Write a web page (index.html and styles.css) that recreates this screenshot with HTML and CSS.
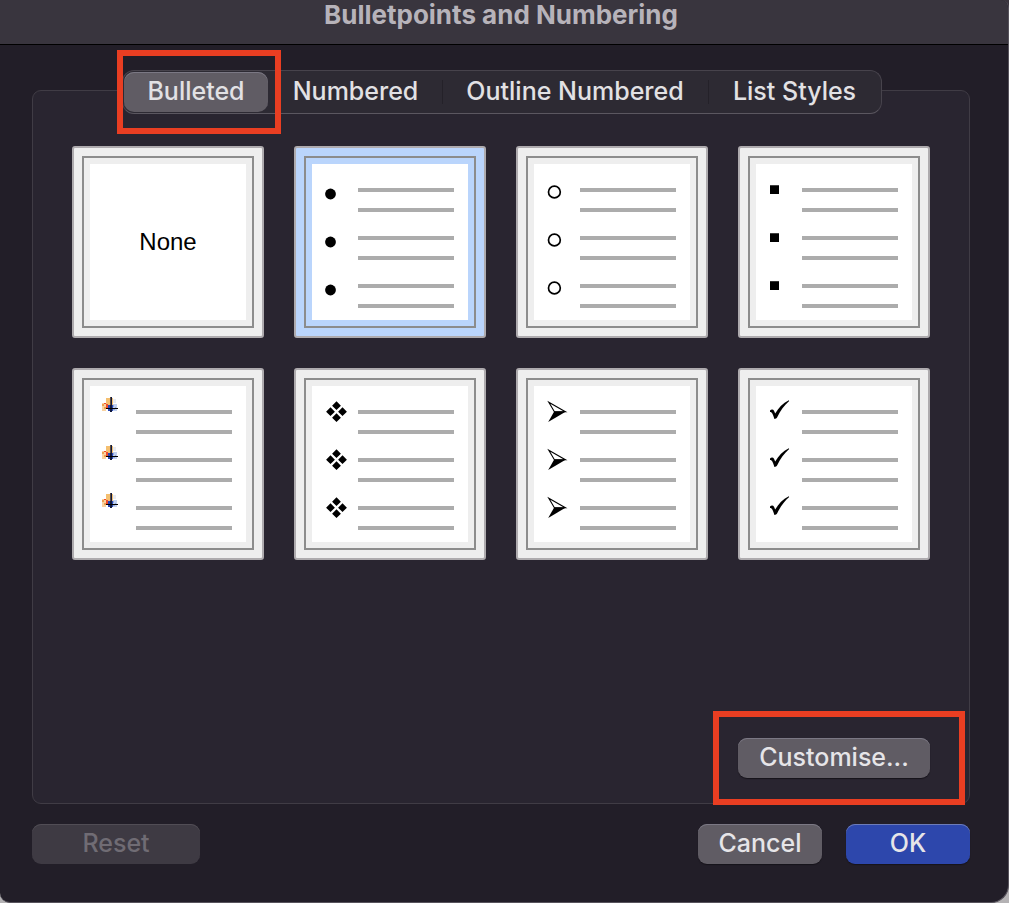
FILE: index.html
```html
<!DOCTYPE html>
<html lang="en-GB">
<head>
<meta charset="utf-8">
<meta name="viewport" content="width=device-width, initial-scale=1">
<title>Bulletpoints and Numbering</title>
<link rel="stylesheet" href="styles.css">
</head>
<body>
<svg class="defs" aria-hidden="true">
  <symbol id="lines" viewBox="0 0 156 156">
    <path fill="#acacac" d="M46 24h96v4h-96zM46 44h96v4h-96zM46 72h96v4h-96zM46 92h96v4h-96zM46 120h96v4h-96zM46 140h96v4h-96z"/>
  </symbol>
  <g id="disc"><circle cx="18.5" cy="30" r="5.4"/></g>
  <g id="ring"><circle cx="20.4" cy="28" r="5.9" fill="none" stroke="#000" stroke-width="1.7"/></g>
  <g id="square"><path d="M14 21.2h9v8.8h-9z"/></g>
  <g id="picture" shape-rendering="crispEdges">
    <path fill="#f9d3a0" d="M12 17h4v8h-4z"/>
    <path fill="#f4bf70" d="M16 12h7v7h-7z"/>
    <path fill="#f0a050" d="M12 18h2v2h-2zM14 21h2v2h-2z"/>
    <path fill="#f04a2a" d="M14 17h2v1h-2zM16 18h2v4h-2z"/>
    <path fill="#e8ebf2" d="M23 13h3v4h-3z"/>
    <path fill="#c3d2f0" d="M23 18h4v7h-4z"/>
    <path fill="#91a8dc" d="M23 19h1v2h-1zM25 21h1v1h-1zM23 23h2v1h-2z"/>
    <path fill="#2848b4" d="M18 19h5v6h-5z"/>
    <path fill="#5a4c40" d="M20 11h2v8h-2z"/>
    <path fill="#10183c" d="M21 11h1v15h-1zM20 19h1v7h-1z"/>
    <path fill="#000" d="M16 22h12v1h-12z"/>
  </g>
  <g id="diamonds"><path d="M24.5 15.3l4.4 4.4-4.4 4.4-4.4-4.4zM24.5 27.3l4.4 4.4-4.4 4.4-4.4-4.4zM18.5 21.3l4.4 4.4-4.4 4.4-4.4-4.4zM30.5 21.3l4.4 4.4-4.4 4.4-4.4-4.4z"/></g>
  <g id="arrow">
    <path d="M14.8 16.2L31.4 25.7H20.4z" fill="#fff" stroke="#000" stroke-width="1.1"/>
    <path d="M32 25.4L14.2 36l6-10.6z"/>
  </g>
  <g id="check"><path d="M14 24.6c1.2-1.4 3.200-1.400 4 .2l1.200 2.800c3.400-6 7.600-10.600 13.600-13.400l.4.8c-5 4.400-8.800 9.800-12 16.200-.6 1-1.600 1.600-2.800 1.800-.8-2.600-1.800-6-3.200-6.800-.4-.3-.8-.4-1.200-.2z"/></g>
</svg>

<main class="dialog">
  <header class="titlebar"><h1 class="title">Bulletpoints and Numbering</h1></header>
  <div class="content">
    <div class="tabs" role="tablist">
      <div class="tab-cell marked marked-tab"><button class="tab tab-active" role="tab" aria-selected="true">Bulleted</button></div>
      <button class="tab" role="tab" aria-selected="false">Numbered</button>
      <button class="tab tab-divided" role="tab" aria-selected="false">Outline Numbered</button>
      <button class="tab tab-divided" role="tab" aria-selected="false">List Styles</button>
    </div>
    <section class="panel" role="tabpanel" aria-label="Bulleted">
      <div class="gallery">
        <button class="tile"><span class="frame"><span class="page">None</span></span></button>
        <button class="tile tile-selected" aria-label="Filled circle" aria-pressed="true"><span class="frame"><svg class="page" viewBox="0 0 156 156"><use href="#lines"/><use href="#disc"/><use href="#disc" y="48"/><use href="#disc" y="96"/></svg></span></button>
        <button class="tile" aria-label="Hollow circle"><span class="frame"><svg class="page" viewBox="0 0 156 156"><use href="#lines"/><use href="#ring"/><use href="#ring" y="48"/><use href="#ring" y="96"/></svg></span></button>
        <button class="tile" aria-label="Square"><span class="frame"><svg class="page" viewBox="0 0 156 156"><use href="#lines"/><use href="#square"/><use href="#square" y="48"/><use href="#square" y="96"/></svg></span></button>
        <button class="tile" aria-label="Picture"><span class="frame"><svg class="page" viewBox="0 0 156 156"><use href="#lines"/><use href="#picture"/><use href="#picture" y="48"/><use href="#picture" y="96"/></svg></span></button>
        <button class="tile" aria-label="Diamonds"><span class="frame"><svg class="page" viewBox="0 0 156 156"><use href="#lines"/><use href="#diamonds"/><use href="#diamonds" y="48"/><use href="#diamonds" y="96"/></svg></span></button>
        <button class="tile" aria-label="Arrow"><span class="frame"><svg class="page" viewBox="0 0 156 156"><use href="#lines"/><use href="#arrow"/><use href="#arrow" y="48"/><use href="#arrow" y="96"/></svg></span></button>
        <button class="tile" aria-label="Tick"><span class="frame"><svg class="page" viewBox="0 0 156 156"><use href="#lines"/><use href="#check"/><use href="#check" y="48"/><use href="#check" y="96"/></svg></span></button>
      </div>
      <div class="panel-actions">
        <div class="marked marked-customise"><button class="button button-wide">Customise...</button></div>
      </div>
    </section>
    <footer class="footer">
      <button class="button button-reset" disabled>Reset</button>
      <button class="button">Cancel</button>
      <button class="button button-primary">OK</button>
    </footer>
  </div>
</main>
</body>
</html>
```
FILE: styles.css
```css
* { box-sizing: border-box; }

body {
  margin: 0;
  background: linear-gradient(#3a353e 50%, #b4b2b4 50%);
  font-family: Inter, "Liberation Sans", sans-serif;
  font-size: 25px;
  line-height: 30px;
}

button {
  margin: 0;
  padding: 0;
  border: 0;
  font: inherit;
  color: inherit;
  background: none;
}

.defs { position: absolute; width: 0; height: 0; }

.dialog {
  display: flex;
  flex-direction: column;
  min-height: 100vh;
  background: #221e28;
  border-right: 1px solid #57535c;
  border-bottom: 1px solid #57535c;
  border-radius: 0 8px 18px 10px;
  overflow: hidden;
  color: #e2e1e4;
}

.titlebar {
  height: 45px;
  padding: 0 38px 0 32px;
  background: #39353e;
  border-bottom: 1px solid #000;
}

.title {
  margin: 0;
  font-size: 26px;
  font-weight: 700;
  line-height: 30px;
  text-align: center;
  color: #b7b3ba;
}

.content {
  flex: 1;
  display: flex;
  flex-direction: column;
  padding: 25px 38px 38px 32px;
}

.tabs {
  z-index: 1;
  align-self: center;
  display: grid;
  grid-template-columns: 146fr 173fr 266fr 173fr;
  width: 760px;
  max-width: 100%;
  height: 44px;
  margin-left: 2px;
  border: 1px solid #47434c;
  border-bottom-color: #5b5760;
  border-radius: 12px;
  background: #2d2a33;
}

.tab-cell { display: flex; padding: 1px; }

.tab {
  padding-bottom: 2px;
  font-weight: 500;
  white-space: nowrap;
}

.tab-active {
  flex: 1;
  border-radius: 10px;
  background: #605c64;
  box-shadow: inset 0 1px #7b7884;
}

.tab-divided {
  background: linear-gradient(#242129, #242129) 0 50% / 1px 24px no-repeat;
}

.marked { position: relative; }

.marked::after {
  content: "";
  position: absolute;
  border: 6px solid #e93e22;
  pointer-events: none;
}

.marked-tab::after { inset: -21px -12px -21px -6px; }
.marked-customise::after { inset: -27px -35px -27px -25px; }

.panel {
  flex: 1;
  display: flex;
  flex-direction: column;
  margin-top: -24px;
  padding: 55px 39px 25px;
  border: 1px solid #403c45;
  border-radius: 9px;
  background: #292530;
}

.gallery {
  display: grid;
  grid-template-columns: repeat(4, 192px);
  justify-content: space-between;
  gap: 30px 16px;
}

.tile {
  height: 192px;
  padding: 8px;
  border: 2px solid #aeabae;
  border-radius: 3px;
  background: #eee;
}

.tile-selected { background: #bad5fc; }

.frame {
  display: block;
  height: 172px;
  padding: 6px;
  border: 2px solid #8c8c8c;
}

.page {
  display: grid;
  place-items: center;
  width: 100%;
  height: 100%;
  background: #fff;
  color: #000;
  font-family: "Liberation Sans", Arial, sans-serif;
  font-size: 24px;
}

.panel-actions {
  display: flex;
  justify-content: flex-end;
  margin-top: auto;
}

.footer {
  display: flex;
  gap: 24px;
  margin-top: 20px;
}

.button {
  width: 124px;
  height: 40px;
  padding-bottom: 2px;
  border-radius: 9px;
  background: #605c64;
  box-shadow: inset 0 1px #7b7884, 0 1px 1px #16131a;
  font-weight: 500;
  color: #e6e5e8;
}

.button-wide { width: 192px; }

.button-reset {
  width: 168px;
  margin-right: auto;
  background: #3e3a43;
  box-shadow: inset 0 1px #514d55;
  color: #706c74;
}

.button-primary {
  background: #2d47ac;
  box-shadow: inset 0 1px #6d7cb8, 0 1px 1px #16131a;
}
```
